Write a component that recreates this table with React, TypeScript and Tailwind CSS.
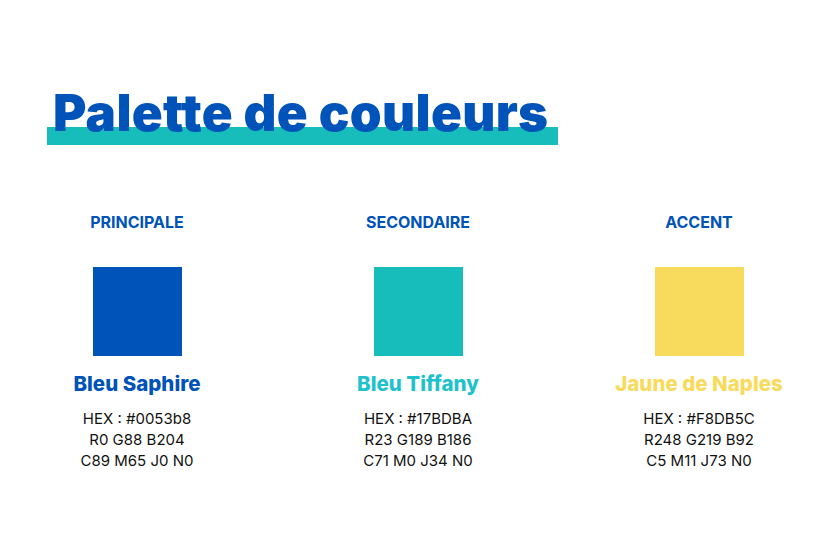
import React from 'react';

type Swatch = {
  label: string;
  name: string;
  color: string;
  nameColor: string;
  lines: string[];
};

const swatches: Swatch[] = [
  {
    label: 'PRINCIPALE',
    name: 'Bleu Saphire',
    color: 'bg-[#0053b8]',
    nameColor: 'text-[#0053b8]',
    lines: ['HEX : #0053b8', 'R0 G88 B204', 'C89 M65 J0 N0'],
  },
  {
    label: 'SECONDAIRE',
    name: 'Bleu Tiffany',
    color: 'bg-[#17bdba]',
    nameColor: 'text-[#1fc2cc]',
    lines: ['HEX : #17BDBA', 'R23 G189 B186', 'C71 M0 J34 N0'],
  },
  {
    label: 'ACCENT',
    name: 'Jaune de Naples',
    color: 'bg-[#f8db5c]',
    nameColor: 'text-[#f8db5c]',
    lines: ['HEX : #F8DB5C', 'R248 G219 B92', 'C5 M11 J73 N0'],
  },
];

const App: React.FC = () => {
  return (
    <div className="w-[840px] h-[555px] bg-white overflow-hidden font-['Inter','Open_Sans',sans-serif]">
      {/* Title */}
      <div className="pt-[83px] pl-[47px]">
        <div className="relative inline-block">
          <div className="absolute left-0 right-0 top-[44px] h-[18px] bg-[#17bdba]" />
          <h1 className="relative pl-[6px] pr-[10px] text-[51px] leading-[60px] font-black tracking-[0.35px] text-[#0053b8]">
            Palette de couleurs
          </h1>
        </div>
      </div>

      {/* Swatches */}
      <div className="mt-[69px] pl-[17px] flex gap-[41px]">
        {swatches.map((s) => (
          <div key={s.label} className="w-[240px] flex flex-col items-center">
            <div className="text-[16px] leading-[20px] font-bold text-[#0053b8]">{s.label}</div>
            <div className={`mt-[35px] w-[89px] h-[89px] ${s.color}`} />
            <div className={`mt-[15px] text-[20.5px] leading-[26px] font-extrabold ${s.nameColor}`}>{s.name}</div>
            <div className="mt-[11px] flex flex-col items-center text-[15px] leading-[21px] text-[#111]">
              {s.lines.map((l) => (
                <div key={l}>{l}</div>
              ))}
            </div>
          </div>
        ))}
      </div>
    </div>
  );
};

export default App;
